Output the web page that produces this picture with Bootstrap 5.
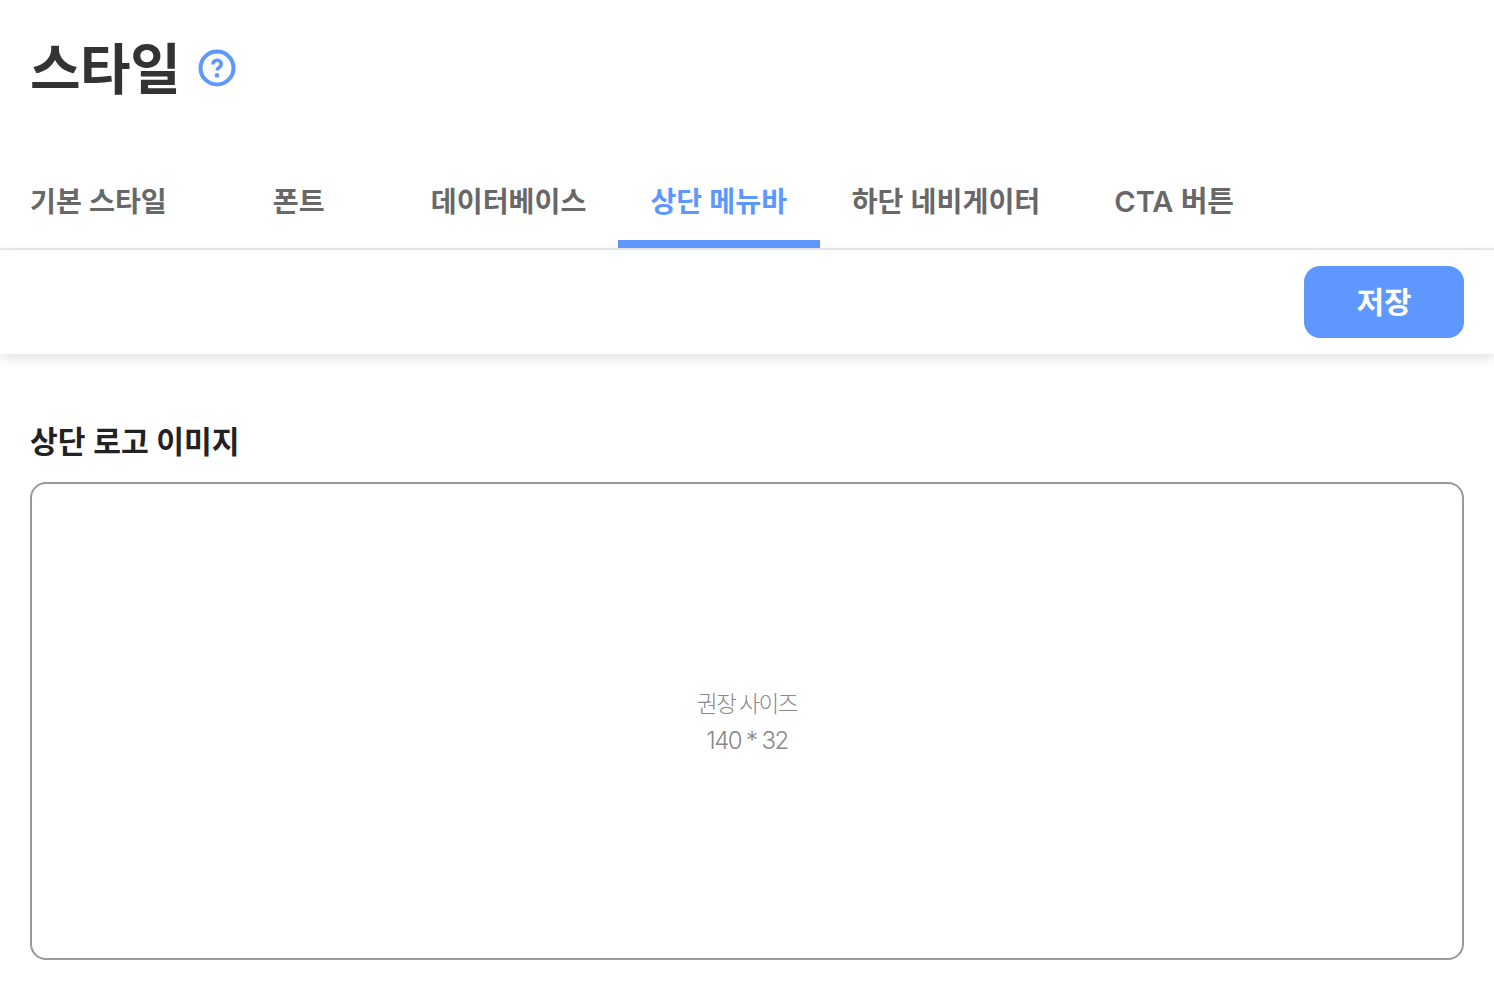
<!DOCTYPE html>
<html lang="ko">
<head>
<meta charset="utf-8">
<title>스타일</title>
<link href="https://cdn.jsdelivr.net/npm/bootstrap@5.3.0/dist/css/bootstrap.min.css" rel="stylesheet">
<style>
html,body{height:984px;overflow:hidden;background:#fff}
body{font-family:Inter,"Noto Sans CJK KR",sans-serif}
.page-head{height:136px;padding:0 30px;gap:18px}
.page-title{font-size:55px;font-weight:700;color:#333;margin:0;padding-top:2px;line-height:1;letter-spacing:-.5px}
.tab-row{height:114px;border-bottom:2px solid #ebebeb}
.tab-item{display:flex;align-items:center;justify-content:center;height:112px;padding:28px 32px 0;min-width:200px;font-size:28.2px;font-weight:600;color:#686868;text-decoration:none;border-bottom:8px solid transparent}
.tab-item:first-child{min-width:0;padding-left:30px}
.tab-item.is-on{color:#5e97ff;border-bottom-color:#5e97ff;padding-right:32.5px}
.tab-cta{margin-left:10px;min-width:0;font-size:29px}
.tool-bar{height:104px;padding:16px 30px;box-shadow:0 4px 12px rgba(0,0,0,.12)}
.save-btn{width:160px;height:72px;border-radius:16px;background:#5e97ff;border:0;color:#fff;font-size:30px;font-weight:600;padding:0}
.save-btn:hover{background:#5e97ff;color:#fff}
.logo-sec{padding:66px 30px 0}
.sec-title{font-size:30.2px;font-weight:600;color:#222;line-height:44px;margin:0 0 18px}
.drop-box{height:478px;padding-top:1px;border:2px solid #999;border-radius:16px;color:#888;font-size:24px;line-height:37px;letter-spacing:-1.6px;font-weight:300}
.hint-kr{font-size:22.5px;letter-spacing:-1.5px;word-spacing:-1px}
</style>
</head>
<body>
<header class="page-head d-flex align-items-center">
  <h1 class="page-title">스타일</h1>
  <svg width="38" height="38" viewBox="0 0 38 38" fill="none" aria-label="도움말">
    <circle cx="19" cy="19" r="16.500" stroke="#5e97ff" stroke-width="4"/>
    <path d="M14.900 15.500c0-2.600 1.800-4.300 4.200-4.300 2.400 0 4.100 1.500 4.100 3.700 0 1.700-.9 2.600-2.200 3.500-1.300.9-1.900 1.600-1.900 3.200" stroke="#5e97ff" stroke-width="3.600"/>
    <circle cx="19" cy="26.400" r="2.300" fill="#5e97ff"/>
  </svg>
</header>
<nav class="tab-row d-flex">
  <a class="tab-item" href="#">기본 스타일</a>
  <a class="tab-item" href="#">폰트</a>
  <a class="tab-item" href="#">데이터베이스</a>
  <a class="tab-item is-on" href="#">상단 메뉴바</a>
  <a class="tab-item" href="#">하단 네비게이터</a>
  <a class="tab-item tab-cta" href="#">CTA 버튼</a>
</nav>
<div class="tool-bar d-flex justify-content-end">
  <button type="button" class="btn save-btn">저장</button>
</div>
<section class="logo-sec">
  <h2 class="sec-title">상단 로고 이미지</h2>
  <div class="drop-box d-flex flex-column align-items-center justify-content-center text-center">
    <div class="hint-kr">권장 사이즈</div>
    <div>140 * 32</div>
  </div>
</section>
<script src="https://cdn.jsdelivr.net/npm/bootstrap@5.3.0/dist/js/bootstrap.bundle.min.js"></script>
</body>
</html>
